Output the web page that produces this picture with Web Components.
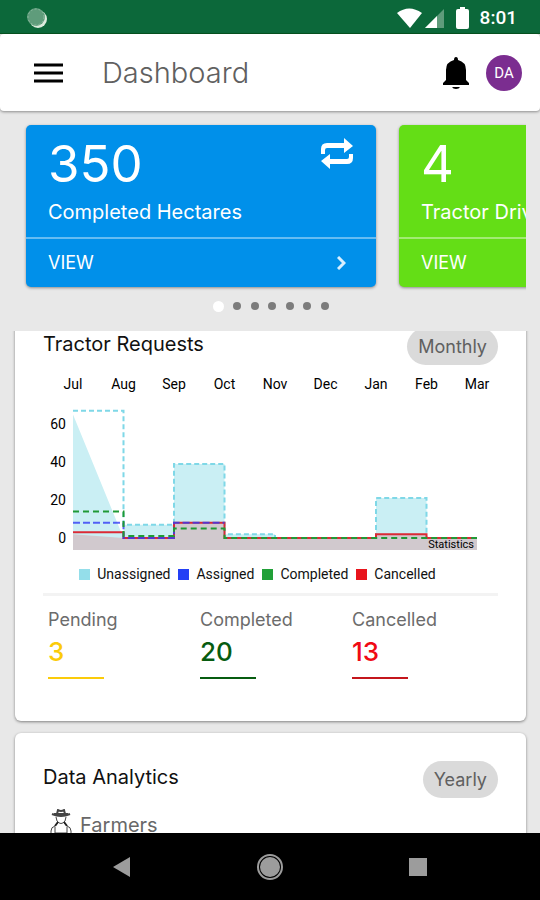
<!DOCTYPE html>
<html lang="en">
<head>
  <meta charset="utf-8">
  <meta name="viewport" content="width=device-width, initial-scale=1">
  <title>Dashboard</title>
  <style>
    body {
      margin: 0;
      font-family: Inter, "Open Sans", sans-serif;
      color: #111;
    }
  </style>
</head>
<body>
  <app-screen>
    <status-bar slot="top" time="8:01"></status-bar>
    <app-header slot="top" heading="Dashboard" initials="DA"></app-header>
    <card-carousel slot="top" pages="7">
      <summary-card value="350" label="Completed Hectares" color="#0090ea">
        <svg slot="icon" width="34" height="32" viewBox="0 0 34 32" aria-hidden="true">
          <path fill="#fff" d="M1 16V11Q1 5 7 5H24V0L33 8L24 15V10H7Q5 10 5 12V16ZM33 16V20Q33 26 27 26H10V31L1 23L10 16V21H27Q29 21 29 19V16Z"/>
        </svg>
      </summary-card>
      <summary-card value="4" label="Tractor Drivers" color="#64de16"></summary-card>
    </card-carousel>

    <dash-panel heading="Tractor Requests" period="Monthly">
      <request-chart></request-chart>
      <stat-row>
        <stat-item label="Pending" value="3" color="#fbcb0a"></stat-item>
        <stat-item label="Completed" value="20" color="#075c10"></stat-item>
        <stat-item label="Cancelled" value="13" color="#f00a14" line="#c4161c"></stat-item>
      </stat-row>
    </dash-panel>
    <dash-panel heading="Data Analytics" period="Yearly">
      <farmer-row>Farmers</farmer-row>
    </dash-panel>

    <nav-bar slot="bottom"></nav-bar>
  </app-screen>

  <script>
    class AppScreen extends HTMLElement {
      constructor() {
        super();
        this.attachShadow({ mode: 'open' });
        this.shadowRoot.innerHTML = `
          <style>
            :host {
              display: flex;
              flex-direction: column;
              height: 100vh;
              background: #e8e8e8;
            }
            main {
              flex: 1;
              min-height: 0;
              padding: 0 14px 0 15px;
              overflow-y: auto;
              scrollbar-width: none;
            }
          </style>
          <slot name="top"></slot>
          <main><slot></slot></main>
          <slot name="bottom"></slot>
        `;
      }

      scrollContent(top) {
        this.shadowRoot.querySelector('main').scrollTop = top;
      }
    }

    class StatusBar extends HTMLElement {
      constructor() {
        super();
        this.attachShadow({ mode: 'open' });
        this.shadowRoot.innerHTML = `
          <style>
            :host {
              display: flex;
              flex: none;
              align-items: center;
              justify-content: space-between;
              box-sizing: border-box;
              height: 34px;
              padding: 2px 23px 0 27px;
              background: #0c683a;
              border-bottom: 1px solid #075520;
              color: #fff;
              font: 500 19px/24px Roboto, sans-serif;
            }
            div { display: flex; align-items: center; }
            .battery { margin: 0 11px; }
          </style>
          <svg width="20" height="20" viewBox="0 0 20 20" aria-hidden="true">
            <circle cx="11" cy="11" r="9" fill="#dcebdd"/>
            <circle cx="9" cy="9" r="9" fill="#5f9c7b"/>
            <circle cx="9" cy="9" r="8" fill="none" stroke="#8dbaa0" stroke-dasharray="2 2"/>
          </svg>
          <div>
            <svg width="26" height="20" viewBox="0 0 26 20" aria-hidden="true">
              <path fill="#fff" d="M0 5Q12-4 25 5L13 20Z"/>
            </svg>
            <svg width="22" height="20" viewBox="0 0 22 20" aria-hidden="true">
              <path fill="#5f9c7b" d="M2 20L21 1V20Z"/>
              <path fill="#fff" d="M2 20L14 8V20Z"/>
            </svg>
            <svg class="battery" width="13" height="22" viewBox="0 0 13 22" aria-hidden="true">
              <path fill="#fff" d="M4 0H9V2H11Q13 2 13 4V20Q13 22 11 22H2Q0 22 0 20V4Q0 2 2 2H4Z"/>
            </svg>
            <span id="time"></span>
          </div>
        `;
        this.shadowRoot.querySelector('#time').textContent = this.getAttribute('time');
      }
    }

    class AppHeader extends HTMLElement {
      constructor() {
        super();
        this.attachShadow({ mode: 'open' });
        this.shadowRoot.innerHTML = `
          <style>
            :host {
              display: flex;
              flex: none;
              align-items: center;
              box-sizing: border-box;
              height: 77px;
              padding: 0 18px 0 33px;
              background: #fff;
              border-radius: 4px;
              box-shadow: 0 1px 3px rgba(0, 0, 0, 0.4);
            }
            button {
              display: flex;
              padding: 0;
              border: 0;
              background: none;
              color: inherit;
            }
            h1 {
              flex: 1;
              margin: 0 0 0 39px;
              color: #606060;
              font-size: 29px;
              font-weight: 300;
              line-height: 36px;
            }
            .avatar {
              align-items: center;
              justify-content: center;
              width: 36px;
              height: 36px;
              margin-left: 16px;
              border-radius: 50%;
              background: #7b2d90;
              color: #fff;
              font: 15px/20px Roboto, sans-serif;
            }
          </style>
          <button aria-label="Menu">
            <svg width="30" height="20" viewBox="0 0 30 20">
              <path stroke="#000" stroke-width="3" d="M1 2H30M1 10H30M1 18H30"/>
            </svg>
          </button>
          <h1></h1>
          <button aria-label="Notifications">
            <svg width="28" height="34" viewBox="0 0 28 34">
              <path d="M12 4Q12 1 14 1T16 4Q24 6 24 14V24L27 27V29H1V27L4 24V14Q4 6 12 4ZM10 31H18Q17 33 14 33T10 31Z"/>
            </svg>
          </button>
          <button class="avatar" aria-label="Account"></button>
        `;
        this.shadowRoot.querySelector('h1').textContent = this.getAttribute('heading');
        this.shadowRoot.querySelector('.avatar').textContent = this.getAttribute('initials');
      }
    }

    class CardCarousel extends HTMLElement {
      constructor() {
        super();
        this.attachShadow({ mode: 'open' });
        this.shadowRoot.innerHTML = `
          <style>
            :host {
              display: block;
              flex: none;
              padding: 10px 14px 0 15px;
            }
            .track {
              display: flex;
              gap: 23px;
              padding: 4px 0 4px 11px;
              overflow: hidden;
            }
            .dots {
              display: flex;
              align-items: center;
              justify-content: space-between;
              width: 116px;
              height: 12px;
              margin: 9px auto 19px;
            }
            button {
              width: 8px;
              height: 8px;
              padding: 0;
              border: 0;
              border-radius: 50%;
              background: #7c7c7c;
            }
            button:first-child {
              width: 11px;
              height: 11px;
              background: #fff;
            }
          </style>
          <div class="track"><slot></slot></div>
          <div class="dots"></div>
        `;
        const dots = this.shadowRoot.querySelector('.dots');
        for (let i = 1; i <= Number(this.getAttribute('pages')); i++) {
          const dot = document.createElement('button');
          dot.setAttribute('aria-label', `Page ${i}`);
          dots.appendChild(dot);
        }
      }
    }

    class SummaryCard extends HTMLElement {
      constructor() {
        super();
        this.attachShadow({ mode: 'open' });
        this.shadowRoot.innerHTML = `
          <style>
            :host {
              display: block;
              flex: 0 0 70%;
              border-radius: 5px;
              background: var(--card-color);
              box-shadow: 0 1px 3px rgba(0, 0, 0, 0.4);
              color: #fff;
            }
            .body {
              display: flex;
              justify-content: space-between;
              height: 99px;
              padding: 13px 22px 0;
            }
            .value { font-size: 51px; line-height: 52px; }
            .label {
              margin-top: 8px;
              font-size: 20px;
              line-height: 28px;
              white-space: nowrap;
            }
            a {
              display: flex;
              align-items: center;
              justify-content: space-between;
              height: 48px;
              padding: 0 30px 0 22px;
              border-top: 2px solid rgba(255, 255, 255, 0.4);
              color: inherit;
              font-size: 18px;
              line-height: 24px;
              text-decoration: none;
            }
          </style>
          <div class="body">
            <div>
              <div class="value"></div>
              <div class="label"></div>
            </div>
            <slot name="icon"></slot>
          </div>
          <a href="#">VIEW
            <svg width="9" height="14" viewBox="0 0 9 14" aria-hidden="true">
              <path fill="none" stroke="#d8efff" stroke-width="3" d="M1 1L7 7L1 13"/>
            </svg>
          </a>
        `;
        this.style.setProperty('--card-color', this.getAttribute('color'));
        this.shadowRoot.querySelector('.value').textContent = this.getAttribute('value');
        this.shadowRoot.querySelector('.label').textContent = this.getAttribute('label');
      }
    }

    class DashPanel extends HTMLElement {
      constructor() {
        super();
        this.attachShadow({ mode: 'open' });
        this.shadowRoot.innerHTML = `
          <style>
            :host {
              display: block;
              margin-bottom: 12px;
              padding: 28px 28px 42px;
              border-radius: 6px;
              background: #fff;
              box-shadow: 0 1px 3px rgba(0, 0, 0, 0.45);
            }
            header {
              display: flex;
              align-items: flex-start;
              justify-content: space-between;
            }
            h2 {
              margin: 2px 0 0;
              font-size: 20px;
              font-weight: 400;
              line-height: 28px;
            }
            button {
              height: 37px;
              padding: 0 11px;
              border: 0;
              border-radius: 19px;
              background: #dadada;
              color: #606060;
              font: 18px/24px Inter, sans-serif;
            }
          </style>
          <header><h2></h2><button></button></header>
          <slot></slot>
        `;
        this.shadowRoot.querySelector('h2').textContent = this.getAttribute('heading');
        this.shadowRoot.querySelector('button').textContent = this.getAttribute('period');
      }
    }

    const months = ['Jul', 'Aug', 'Sep', 'Oct', 'Nov', 'Dec', 'Jan', 'Feb', 'Mar'];
    const series = [
      { name: 'Unassigned', color: '#94deea', line: '#7fd8e7', dash: '5 3', data: [67, 7, 39, 2, 0, 0, 21, 0] },
      { name: 'Assigned', color: '#2340f5', line: 'rgba(50, 60, 245, 0.8)', dash: '7 3', data: [8, 0, 8] },
      { name: 'Completed', color: '#21a038', line: '#1f9a35', dash: '6 4', data: [14, 1, 5, 0, 0, 0, 0, 0] },
      { name: 'Cancelled', color: '#e8141c', line: '#dc2a35', dash: 'none', data: [3, 0, 8, 0, 0, 0, 2, 0] }
    ];

    class RequestChart extends HTMLElement {
      constructor() {
        super();
        this.attachShadow({ mode: 'open' });
        this.shadowRoot.innerHTML = `
          <style>
            :host {
              display: block;
              margin-top: 9px;
              padding-bottom: 10px;
              border-bottom: 3px solid #f3f3f3;
              font: 14px/18px Roboto, sans-serif;
            }
            svg { display: block; width: 100%; overflow: visible; }
            ul {
              display: flex;
              justify-content: center;
              gap: 8px;
              margin: 15px 26px 0 0;
              padding: 0;
              list-style: none;
            }
            li { display: flex; align-items: center; gap: 7px; }
            i { width: 11px; height: 11px; }
          </style>
          <svg viewBox="0 0 455 176" role="img" aria-label="Requests by month">${this.plot()}</svg>
          <ul>${series.map(s => `<li><i style="background:${s.color}"></i>${s.name}</li>`).join('')}</ul>
        `;
      }

      x(i) {
        return 30 + i * 50.5;
      }

      y(value) {
        return 164 - value * 1.9;
      }

      steps(data) {
        return data.map((v, i) => `L${this.x(i)} ${this.y(v)}H${this.x(i + 1)}`).join('').replace('L', 'M');
      }

      // July is filled as a slope down to the next step, the rest as steps
      area(data, first, fill) {
        const rest = this.steps(data).replace(/^M[^L]*/, '');
        return `<path fill="${fill}" d="M${this.x(0)} ${this.y(first)}L${this.x(1)} ${this.y(0)}${rest}V176H${this.x(0)}Z"/>`;
      }

      plot() {
        const [unassigned, assigned, completed, cancelled] = series;
        const line = s => `<path fill="none" stroke="${s.line}" stroke-width="2" stroke-dasharray="${s.dash}" d="${this.steps(s.data)}"/>`;
        return `
          ${months.map((m, i) => `<text x="${this.x(i)}" y="15" text-anchor="middle">${m}</text>`).join('')}
          ${[60, 40, 20, 0].map(v => `<text x="23" y="${this.y(v) + 5}" text-anchor="end">${v}</text>`).join('')}
          ${this.area(unassigned.data, 65, '#caeff4')}
          ${this.area(cancelled.data, 2, '#d1c9ce')}
          ${[unassigned, cancelled, assigned, completed].map(line).join('')}
          <text x="431" y="174" text-anchor="end" font-size="11">Statistics</text>
        `;
      }
    }

    class StatRow extends HTMLElement {
      constructor() {
        super();
        this.attachShadow({ mode: 'open' });
        this.shadowRoot.innerHTML = `
          <style>
            :host {
              display: grid;
              grid-template-columns: repeat(3, 1fr);
              margin-right: -6px;
              padding: 12px 0 0 5px;
            }
          </style>
          <slot></slot>
        `;
      }
    }

    class StatItem extends HTMLElement {
      constructor() {
        super();
        this.attachShadow({ mode: 'open' });
        this.shadowRoot.innerHTML = `
          <style>
            :host { display: block; }
            .label { color: #6c6c6c; font-size: 18px; line-height: 24px; }
            .value {
              width: 56px;
              padding: 4px 0 9px;
              border-bottom: 2px solid var(--line-color);
              color: var(--stat-color);
              font-size: 26px;
              font-weight: 500;
              line-height: 32px;
            }
          </style>
          <div class="label"></div>
          <div class="value"></div>
        `;
        const color = this.getAttribute('color');
        this.style.setProperty('--stat-color', color);
        this.style.setProperty('--line-color', this.getAttribute('line') || color);
        this.shadowRoot.querySelector('.label').textContent = this.getAttribute('label');
        this.shadowRoot.querySelector('.value').textContent = this.getAttribute('value');
      }
    }

    class FarmerRow extends HTMLElement {
      constructor() {
        super();
        this.attachShadow({ mode: 'open' });
        this.shadowRoot.innerHTML = `
          <style>
            :host {
              display: flex;
              align-items: center;
              gap: 8px;
              margin-top: 10px;
              padding-left: 7px;
              color: #686868;
              font-size: 20px;
              line-height: 34px;
            }
          </style>
          <svg width="22" height="32" viewBox="0 0 22 32" fill="none" stroke="#444" aria-hidden="true">
            <path d="M7 5L8 1Q11 3 14 1L15 5M2 5Q11 9 20 5M4 5H18" stroke-width="2"/>
            <path d="M6 8L7 12Q11 17 15 12L16 8M8 14L5 17Q1 18 1 22V32M14 14L17 17Q21 18 21 22V32M5 18V24H17V18M5 24V32M17 24V32"/>
            <path d="M5 17L8 13M17 17L14 13M2 25H5M17 25H20" stroke="#222" stroke-width="2"/>
          </svg>
          <slot></slot>
        `;
      }
    }

    class NavBar extends HTMLElement {
      constructor() {
        super();
        this.attachShadow({ mode: 'open' });
        this.shadowRoot.innerHTML = `
          <style>
            :host {
              display: grid;
              flex: none;
              grid-template-columns: repeat(3, 1fr);
              place-items: center;
              height: 67px;
              padding: 0 48px;
              background: #000;
            }
            button {
              display: flex;
              padding: 0;
              border: 0;
              background: none;
            }
          </style>
          <button aria-label="Back">
            <svg width="18" height="20" viewBox="0 0 18 20"><path fill="#9c9c9c" d="M0 10L17 0V20Z"/></svg>
          </button>
          <button aria-label="Home">
            <svg width="28" height="28" viewBox="0 0 28 28">
              <circle cx="14" cy="14" r="12" fill="none" stroke="#9c9c9c" stroke-width="2"/>
              <circle cx="14" cy="14" r="10" fill="#9c9c9c"/>
            </svg>
          </button>
          <button aria-label="Recent apps">
            <svg width="18" height="18" viewBox="0 0 18 18"><path fill="#9c9c9c" d="M0 0H18V18H0Z"/></svg>
          </button>
        `;
      }
    }

    customElements.define('status-bar', StatusBar);
    customElements.define('app-header', AppHeader);
    customElements.define('summary-card', SummaryCard);
    customElements.define('card-carousel', CardCarousel);
    customElements.define('request-chart', RequestChart);
    customElements.define('stat-item', StatItem);
    customElements.define('stat-row', StatRow);
    customElements.define('farmer-row', FarmerRow);
    customElements.define('dash-panel', DashPanel);
    customElements.define('nav-bar', NavBar);
    customElements.define('app-screen', AppScreen);

    document.querySelector('app-screen').scrollContent(31);
  </script>
</body>
</html>
